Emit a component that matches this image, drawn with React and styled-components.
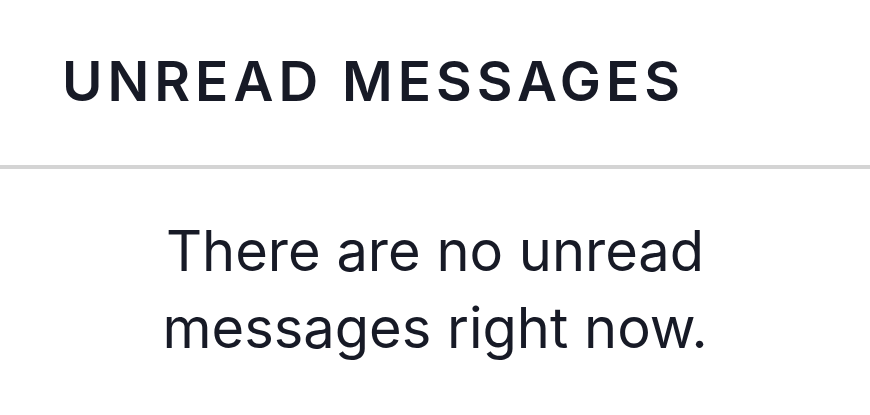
import styled, { createGlobalStyle } from "styled-components";

const GlobalStyle = createGlobalStyle`
  html, body {
    margin: 0;
    padding: 0;
    background: #ffffff;
  }
  body {
    font-family: Inter, "Noto Sans", sans-serif;
    color: #171a26;
  }
`;

export default function App() {
  return (
    <Panel>
      <GlobalStyle />
      <Header>
        <Title>Unread Messages</Title>
      </Header>
      <Empty>
        <EmptyText>There are no unread messages right now.</EmptyText>
      </Empty>
    </Panel>
  );
}

const Panel = styled.div`
  display: flex;
  flex-direction: column;
  width: 870px;
  height: 415px;
  background: #ffffff;
`;

const Header = styled.header`
  padding: 44px 62px 0 62px;
  height: 121px;
  border-bottom: 4px solid #d4d4d4;
`;

const Title = styled.h1`
  margin: 0;
  font-size: 55px;
  line-height: 74px;
  font-weight: 600;
  letter-spacing: 5px;
  text-transform: uppercase;
  color: #171a26;
`;

const Empty = styled.div`
  display: flex;
  justify-content: center;
  padding-top: 44px;
`;

const EmptyText = styled.p`
  margin: 0;
  max-width: 640px;
  font-size: 56px;
  line-height: 77px;
  font-weight: 400;
  text-align: center;
  color: #171a26;
`;
